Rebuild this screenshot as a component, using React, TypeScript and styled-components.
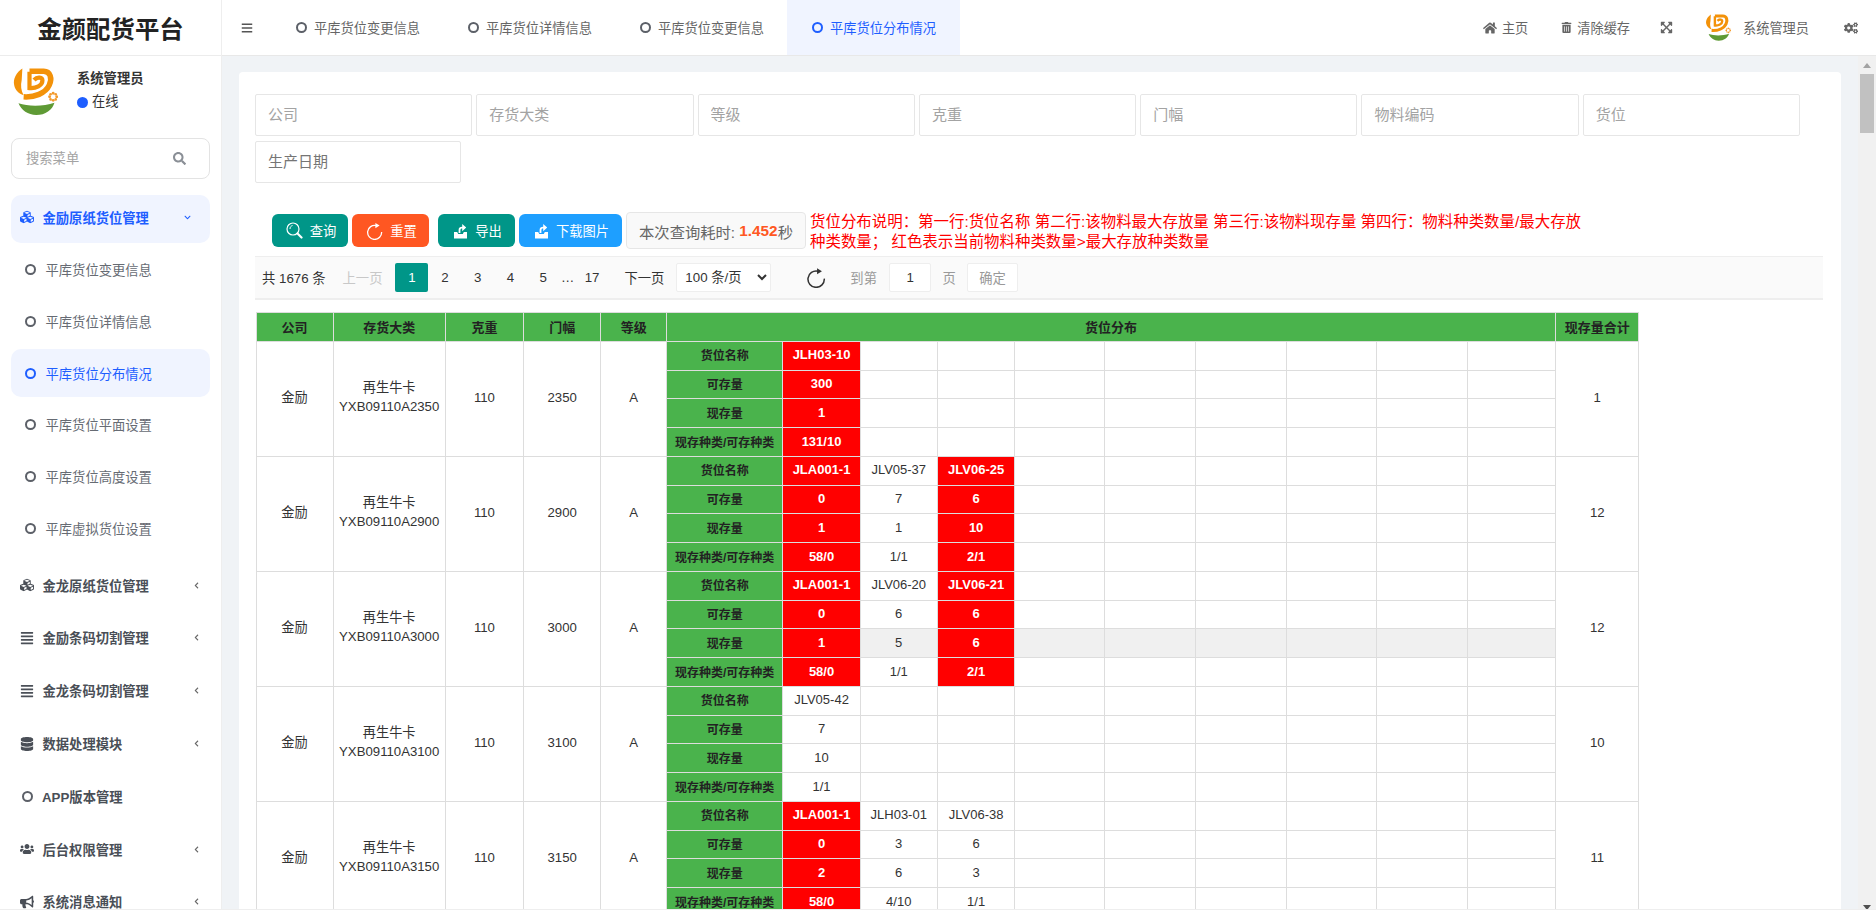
import React from 'react'
import styled, { createGlobalStyle } from 'styled-components'
import {
  FaAlignJustify,
  FaBars,
  FaBullhorn,
  FaCogs,
  FaCubes,
  FaDatabase,
  FaExpandArrowsAlt,
  FaHome,
  FaSearch,
  FaTrashAlt,
  FaUsers,
  FaChevronDown,
  FaChevronLeft,
} from 'react-icons/fa'

const FONT = '"Liberation Sans", "Noto Sans CJK SC", sans-serif'
const BLUE = '#1e5eff'
const TEAL = '#009688'
const GREEN = '#4ab34c'
const LINE = '#dddddd'

const GlobalStyle = createGlobalStyle`
  html, body {
    margin: 0;
    padding: 0;
    background: #eeeeee;
    overflow: hidden;
  }
  * {
    box-sizing: border-box;
  }
  body {
    font-family: ${FONT};
    font-size: 13.3px;
    color: #333;
  }
`

const Shell = styled.div`
  display: grid;
  grid-template-columns: 222px 1fr;
  height: 909px;
  overflow: hidden;
  background: #f0f3f6;
`

const Sidebar = styled.aside`
  display: flex;
  flex-direction: column;
  background: #fff;
  border-right: 1px solid #eeeeee;
  overflow: hidden;
`

const Brand = styled.div`
  flex: none;
  height: 56px;
  display: flex;
  align-items: center;
  justify-content: center;
  font-size: 24.4px;
  font-weight: 700;
  color: #222;
  border-bottom: 1px solid #ececec;
`

const UserPanel = styled.div`
  flex: none;
  height: 82px;
  display: flex;
  padding: 10px 0 0 12px;
`

const UserText = styled.div`
  margin-left: 19px;
  padding-top: 4px;
`

const UserName = styled.div`
  font-size: 13.3px;
  font-weight: 700;
  line-height: 18px;
  color: #333;
`

const OnlineRow = styled.div`
  display: flex;
  align-items: center;
  margin-top: 5px;
  font-size: 13.3px;
  line-height: 18px;
`

const OnlineDot = styled.span`
  width: 11px;
  height: 11px;
  margin-right: 4px;
  border-radius: 50%;
  background: ${BLUE};
`

const SearchBox = styled.div`
  flex: none;
  height: 41px;
  margin: 0 11px;
  padding: 0 23px 0 14px;
  display: flex;
  align-items: center;
  justify-content: space-between;
  border: 1px solid #e3e3e3;
  border-radius: 8px;
  color: #8a8f96;
`

const SearchInput = styled.input`
  width: 120px;
  padding: 0;
  border: 0;
  outline: 0;
  font-family: ${FONT};
  font-size: 13.3px;
  &::placeholder {
    color: #a3a3a3;
  }
`

const Menu = styled.nav`
  flex: none;
  margin: 16px 11px 0;
  display: flex;
  flex-direction: column;
`

const MenuHead = styled.div<{ $open?: boolean }>`
  height: 47.5px;
  margin-bottom: ${({ $open }) => ($open ? 3.5 : 5.3)}px;
  padding: 0 11px ${({ $open }) => ($open ? 3 : 0)}px 8px;
  display: flex;
  align-items: center;
  border-radius: 10px;
  font-size: 13.3px;
  font-weight: 700;
  color: ${({ $open }) => ($open ? BLUE : '#4a4f57')};
  background: ${({ $open }) => ($open ? '#f0f4ff' : 'transparent')};
`

const MenuIcon = styled.span`
  width: 16px;
  margin-right: 7.5px;
  display: flex;
  justify-content: center;
  font-size: 14px;
`

const MenuLabel = styled.span`
  flex: 1;
`

const MenuChevron = styled.span<{ $open?: boolean }>`
  display: flex;
  margin-right: ${({ $open }) => ($open ? 8 : -1)}px;
  font-size: 7px;
  color: ${({ $open }) => ($open ? BLUE : '#666')};
`

const Ring = styled.i<{ $active?: boolean }>`
  flex: none;
  display: block;
  width: 11px;
  height: 11px;
  border: 2px solid ${({ $active }) => ($active ? BLUE : '#5c6068')};
  border-radius: 50%;
`

const AppRing = styled(Ring)`
  margin: 0 9px 0 3px;
`

const SubList = styled.div`
  margin-bottom: 9.5px;
  display: flex;
  flex-direction: column;
  gap: 4.2px;
`

const SubItem = styled.div<{ $active?: boolean }>`
  height: 47.5px;
  padding-left: 14px;
  display: flex;
  align-items: center;
  gap: 9.5px;
  border-radius: 10px;
  font-size: 13.3px;
  color: ${({ $active }) => ($active ? BLUE : '#666b73')};
  background: ${({ $active }) => ($active ? '#f0f4ff' : 'transparent')};
`

const Main = styled.div`
  display: flex;
  flex-direction: column;
  min-width: 0;
`

const TopBar = styled.header`
  flex: none;
  height: 56px;
  display: flex;
  align-items: stretch;
  background: #fff;
  border-bottom: 1px solid #e8e8e8;
  color: #666;
`

const Burger = styled.div`
  width: 49px;
  padding-left: 19px;
  display: flex;
  align-items: center;
  font-size: 12px;
  color: #555;
`

const Tab = styled.div<{ $active?: boolean }>`
  flex: none;
  width: ${({ $active }) => ($active ? 173 : 172)}px;
  padding-left: 25px;
  display: flex;
  align-items: center;
  gap: 7px;
  font-size: 13.25px;
  color: ${({ $active }) => ($active ? BLUE : '#666')};
  background: ${({ $active }) => ($active ? '#f0f4ff' : 'transparent')};
`

const Tools = styled.div`
  margin-left: auto;
  padding-right: 18px;
  display: flex;
  align-items: center;
`

const Tool = styled.div<{ $gap?: number }>`
  margin-left: ${({ $gap }) => $gap ?? 33}px;
  display: flex;
  align-items: center;
  gap: 5px;
  font-size: 13.2px;
  color: #666;
`

const Body = styled.div`
  flex: 1;
  min-height: 0;
  display: flex;
`

const Content = styled.main`
  flex: 1;
  min-width: 0;
  padding: 16px 17px 0 17px;
  overflow: hidden;
`

const Card = styled.section`
  height: 100%;
  padding: 22px 17px 0 16px;
  background: #fff;
  border-radius: 4px 4px 0 0;
  overflow: hidden;
`

const Filters = styled.div`
  display: flex;
  flex-wrap: wrap;
  gap: 5.4px 4px;
`

const FilterInput = styled.input<{ $wide?: boolean; $strong?: boolean }>`
  width: ${({ $wide }) => ($wide ? 205.5 : 217.3)}px;
  height: 42px;
  padding: 0 12px 2px;
  border: 1px solid #e6e6e6;
  border-radius: 2px;
  outline: 0;
  font-family: ${FONT};
  font-size: 15px;
  &::placeholder {
    color: ${({ $strong }) => ($strong ? '#757575' : '#a3a3a3')};
  }
`

const Toolbar = styled.div`
  height: 37px;
  margin-top: 29px;
  padding-left: 17px;
  display: flex;
  align-items: center;
  gap: 4px;
`

const ActionButton = styled.button<{ $color: string; $width: number; $gap?: number }>`
  flex: none;
  width: ${({ $width }) => $width}px;
  height: 33px;
  margin-left: ${({ $gap }) => $gap ?? 0}px;
  padding: 0 0 0 2px;
  display: flex;
  align-items: center;
  justify-content: center;
  gap: 7px;
  border: 0;
  border-radius: 6px;
  font-family: ${FONT};
  font-size: 13.3px;
  color: #fff;
  background: ${({ $color }) => $color};
`

const TimeBox = styled.div`
  flex: none;
  width: 180px;
  height: 37px;
  display: flex;
  align-items: center;
  justify-content: center;
  border: 1px solid #e6e6e6;
  border-radius: 4px;
  background: #f9f9f9;
  font-size: 15.3px;
  white-space: pre;
  color: #666;
  b {
    color: #ff5722;
  }
`

const Note = styled.p`
  width: 778px;
  margin: 0;
  padding-top: 2px;
  font-size: 15.45px;
  line-height: 20px;
  color: #ff0000;
`

const Pager = styled.div`
  width: 1568px;
  height: 43.5px;
  margin-top: 7px;
  padding-left: 7px;
  display: flex;
  align-items: center;
  background: #fafafa;
  border-top: 1px solid #eeeeee;
  border-bottom: 2px solid #eeeeee;
  font-size: 13.3px;
  color: #333;
`

const PagerText = styled.span<{ $muted?: boolean; $gap?: number }>`
  flex: none;
  margin-left: ${({ $gap }) => $gap ?? 0}px;
  color: ${({ $muted }) => ($muted ? '#c8c8c8' : 'inherit')};
`

const PagerHint = styled(PagerText)`
  color: #999;
`

const PageLink = styled.span<{ $current?: boolean; $width?: number }>`
  flex: none;
  width: ${({ $width }) => $width ?? 32.8}px;
  height: 29px;
  display: flex;
  align-items: center;
  justify-content: center;
  border-radius: 2px;
  color: ${({ $current }) => ($current ? '#fff' : 'inherit')};
  background: ${({ $current }) => ($current ? TEAL : 'transparent')};
`

const FirstPage = styled(PageLink)`
  margin-left: 13px;
`

const SizeSelect = styled.select`
  flex: none;
  width: 95px;
  height: 29px;
  margin-left: 12px;
  padding: 0 2px 0 4px;
  border: 1px solid #eeeeee;
  border-radius: 2px;
  outline: 0;
  background: #fff;
  font-family: ${FONT};
  font-size: 13.3px;
  color: #333;
`

const RefreshSlot = styled.span`
  flex: none;
  width: 20px;
  margin-left: 35px;
  display: flex;
  color: #333;
`

const JumpInput = styled.input`
  width: 42.5px;
  height: 29px;
  margin-left: 12px;
  padding: 0;
  border: 1px solid #eeeeee;
  border-radius: 2px;
  outline: 0;
  text-align: center;
  font-family: ${FONT};
  font-size: 13.3px;
  color: #333;
`

const ConfirmButton = styled.button`
  width: 50.5px;
  height: 29px;
  margin-left: 11.5px;
  padding: 0;
  border: 1px solid #eeeeee;
  border-radius: 2px;
  background: #fff;
  font-family: ${FONT};
  font-size: 13.3px;
  color: #999;
`

const Grid = styled.table`
  width: 1383px;
  margin: 12px 0 0 0.5px;
  table-layout: fixed;
  border-collapse: collapse;
  font-size: 13px;
  color: #333;
`

const HeadCell = styled.th`
  height: 29px;
  padding: 0;
  border: 1px solid ${LINE};
  font-size: 13px;
  font-weight: 700;
  text-align: center;
  color: #222;
  background: ${GREEN};
`

const InfoCell = styled.td`
  padding: 0 0 3px;
  border: 1px solid ${LINE};
  font-size: 13.2px;
  line-height: 19px;
  text-align: center;
`

const LabelCell = styled.td`
  height: 28.75px;
  padding: 0 0 2px;
  border: 1px solid ${LINE};
  font-size: 12px;
  font-weight: 700;
  text-align: center;
  color: #222;
  background: ${GREEN};
`

const SlotCell = styled.td<{ $alert?: boolean; $hover?: boolean }>`
  height: 28.75px;
  padding: 0 0 2px;
  border: 1px solid ${LINE};
  text-align: center;
  font-weight: ${({ $alert }) => ($alert ? 700 : 400)};
  color: ${({ $alert }) => ($alert ? '#fff' : '#333')};
  background: ${({ $alert, $hover }) => ($alert ? '#ff0000' : $hover ? '#f0f0f0' : '#fff')};
`

const ScrollRail = styled.div`
  flex: none;
  width: 18.5px;
  padding-top: 7px;
  display: flex;
  flex-direction: column;
  align-items: center;
  background: #f1f1f1;
`

const RailArrow = styled.i<{ $down?: boolean }>`
  display: block;
  border-left: 4px solid transparent;
  border-right: 4px solid transparent;
  border-top: ${({ $down }) => ($down ? '5px solid #505050' : '0')};
  border-bottom: ${({ $down }) => ($down ? '0' : '5px solid #a3a3a3')};
  margin-top: ${({ $down }) => ($down ? 'auto' : '0')};
  margin-bottom: ${({ $down }) => ($down ? '7px' : '0')};
`

const RailThumb = styled.div`
  width: 14.5px;
  height: 59px;
  margin-top: 6px;
  background: #c1c1c1;
`

const Logo: React.FC<{ size: number }> = ({ size }) => (
  <svg width={size} height={size * 1.1} viewBox="30 32 142 156" style={{ flex: 'none' }}>
    <path d="M62 40C44 52 32 72 37 92c3 14 14 25 29 30-8-14-10-30-6-47z" fill="#f39209" />
    <path d="M84 48h44c20 0 27 22 17 43-12 26-46 38-79 36" fill="none" stroke="#f39209" strokeWidth="17" />
    <path d="M84 50v50c20 2 40-8 40-23 0-11-16-13-26-2" fill="none" stroke="#f39209" strokeWidth="13" />
    <path d="M50 147c30 10 78 10 111-2-6 22-28 38-56 38-26 0-46-14-55-36z" fill="#5f9a35" />
    <g fill="#f39a2c">
      <circle cx="157" cy="116" r="4.5" />
      <circle cx="157" cy="138" r="4.5" />
      <circle cx="146" cy="127" r="4.5" />
      <circle cx="168" cy="127" r="4.5" />
      <circle cx="149" cy="119" r="4" />
      <circle cx="165" cy="119" r="4" />
      <circle cx="149" cy="135" r="4" />
      <circle cx="165" cy="135" r="4" />
    </g>
  </svg>
)

const LensIcon = () => (
  <svg width="17" height="17" viewBox="0 0 17 17" fill="none" stroke="#fff">
    <circle cx="7" cy="7" r="6" strokeWidth="1.2" />
    <path d="M4 7c0-2 1-3 2.5-3.5" strokeWidth="1" />
    <path d="M11.5 11.5l4 4" strokeWidth="2.2" strokeLinecap="round" />
  </svg>
)

const RefreshIcon: React.FC<{ size?: number }> = ({ size = 17 }) => (
  <svg width={size} height={size + 1} viewBox="0 0 17 18" fill="none" stroke="currentColor">
    <path d="M10.2 3.6A7 7 0 1 0 15.6 10" strokeWidth="1.3" />
    <path d="M9.4 1l4.2 2.6-4.2 2.6z" fill="currentColor" stroke="none" />
  </svg>
)

const ExportIcon = () => (
  <svg width="15" height="16" viewBox="0 0 15 16" fill="#fff">
    <path d="M1 9h3.2l1 2h4.6l1-2H14v6.5H1z" />
    <path d="M5.6 10V7c0-2 1.4-3.2 3.6-3.2V1l4 3.6-4 3.6V5.6c-1.2 0-1.8.6-1.8 1.6V10z" />
  </svg>
)

const SUB_ITEMS = ['平库货位变更信息', '平库货位详情信息', '平库货位分布情况', '平库货位平面设置', '平库货位高度设置', '平库虚拟货位设置']
const TABS = ['平库货位变更信息', '平库货位详情信息', '平库货位变更信息', '平库货位分布情况']
const FILTERS = ['公司', '存货大类', '等级', '克重', '门幅', '物料编码', '货位']
const ROW_LABELS = ['货位名称', '可存量', '现存量', '现存种类/可存种类']
const COLUMN_WIDTHS = [77, 112.4, 78, 77.5, 65.5, 116.6, 77.1, 77.3, 77.5, 90, 91, 91.1, 89.9, 91.1, 87.7, 83.2]

type Slot = { values: string[]; alert?: boolean }
type Group = { width: string; total: string; slots: Slot[]; hoverRow?: number }

const GROUPS: Group[] = [
  { width: '2350', total: '1', slots: [{ values: ['JLH03-10', '300', '1', '131/10'], alert: true }] },
  {
    width: '2900',
    total: '12',
    slots: [
      { values: ['JLA001-1', '0', '1', '58/0'], alert: true },
      { values: ['JLV05-37', '7', '1', '1/1'] },
      { values: ['JLV06-25', '6', '10', '2/1'], alert: true },
    ],
  },
  {
    width: '3000',
    total: '12',
    hoverRow: 2,
    slots: [
      { values: ['JLA001-1', '0', '1', '58/0'], alert: true },
      { values: ['JLV06-20', '6', '5', '1/1'] },
      { values: ['JLV06-21', '6', '6', '2/1'], alert: true },
    ],
  },
  { width: '3100', total: '10', slots: [{ values: ['JLV05-42', '7', '10', '1/1'] }] },
  {
    width: '3150',
    total: '11',
    slots: [
      { values: ['JLA001-1', '0', '2', '58/0'], alert: true },
      { values: ['JLH03-01', '3', '6', '4/10'] },
      { values: ['JLV06-38', '6', '3', '1/1'] },
    ],
  },
]

const DistributionTable = () => (
  <Grid>
    <colgroup>
      {COLUMN_WIDTHS.map((w, i) => (
        <col key={i} style={{ width: w }} />
      ))}
    </colgroup>
    <thead>
      <tr>
        <HeadCell>公司</HeadCell>
        <HeadCell>存货大类</HeadCell>
        <HeadCell>克重</HeadCell>
        <HeadCell>门幅</HeadCell>
        <HeadCell>等级</HeadCell>
        <HeadCell colSpan={10}>货位分布</HeadCell>
        <HeadCell>现存量合计</HeadCell>
      </tr>
    </thead>
    <tbody>
      {GROUPS.map((group) =>
        ROW_LABELS.map((label, row) => (
          <tr key={group.width + label}>
            {row === 0 && (
              <>
                <InfoCell rowSpan={4}>金励</InfoCell>
                <InfoCell rowSpan={4}>
                  再生牛卡
                  <br />
                  {'YXB09110A' + group.width}
                </InfoCell>
                <InfoCell rowSpan={4}>110</InfoCell>
                <InfoCell rowSpan={4}>{group.width}</InfoCell>
                <InfoCell rowSpan={4}>A</InfoCell>
              </>
            )}
            <LabelCell>{label}</LabelCell>
            {Array.from({ length: 9 }, (_, col) => {
              const slot = group.slots[col]
              return (
                <SlotCell key={col} $alert={slot?.alert} $hover={group.hoverRow === row}>
                  {slot?.values[row]}
                </SlotCell>
              )
            })}
            {row === 0 && <InfoCell rowSpan={4}>{group.total}</InfoCell>}
          </tr>
        ))
      )}
    </tbody>
  </Grid>
)

const App: React.FC = () => {
  return (
    <>
      <GlobalStyle />
      <Shell>
        <Sidebar>
          <Brand>金颜配货平台</Brand>
          <UserPanel>
            <Logo size={46} />
            <UserText>
              <UserName>系统管理员</UserName>
              <OnlineRow>
                <OnlineDot />
                在线
              </OnlineRow>
            </UserText>
          </UserPanel>
          <SearchBox>
            <SearchInput placeholder="搜索菜单" />
            <FaSearch size={13} />
          </SearchBox>
          <Menu>
            <MenuHead $open>
              <MenuIcon>
                <FaCubes />
              </MenuIcon>
              <MenuLabel>金励原纸货位管理</MenuLabel>
              <MenuChevron $open>
                <FaChevronDown />
              </MenuChevron>
            </MenuHead>
            <SubList>
              {SUB_ITEMS.map((item, i) => (
                <SubItem key={item} $active={i === 2}>
                  <Ring $active={i === 2} />
                  {item}
                </SubItem>
              ))}
            </SubList>
            {[
              { label: '金龙原纸货位管理', icon: <FaCubes /> },
              { label: '金励条码切割管理', icon: <FaAlignJustify /> },
              { label: '金龙条码切割管理', icon: <FaAlignJustify /> },
              { label: '数据处理模块', icon: <FaDatabase /> },
            ].map(({ label, icon }) => (
              <MenuHead key={label}>
                <MenuIcon>{icon}</MenuIcon>
                <MenuLabel>{label}</MenuLabel>
                <MenuChevron>
                  <FaChevronLeft />
                </MenuChevron>
              </MenuHead>
            ))}
            <MenuHead>
              <AppRing />
              <MenuLabel>APP版本管理</MenuLabel>
            </MenuHead>
            {[
              { label: '后台权限管理', icon: <FaUsers /> },
              { label: '系统消息通知', icon: <FaBullhorn /> },
            ].map(({ label, icon }) => (
              <MenuHead key={label}>
                <MenuIcon>{icon}</MenuIcon>
                <MenuLabel>{label}</MenuLabel>
                <MenuChevron>
                  <FaChevronLeft />
                </MenuChevron>
              </MenuHead>
            ))}
          </Menu>
        </Sidebar>
        <Main>
          <TopBar>
            <Burger>
              <FaBars />
            </Burger>
            {TABS.map((tab, i) => (
              <Tab key={i} $active={i === 3}>
                <Ring $active={i === 3} />
                {tab}
              </Tab>
            ))}
            <Tools>
              <Tool>
                <FaHome size={14} />
                主页
              </Tool>
              <Tool>
                <FaTrashAlt size={11} />
                清除缓存
              </Tool>
              <Tool $gap={30}>
                <FaExpandArrowsAlt size={13} />
              </Tool>
              <Tool $gap={32}>
                <Logo size={26} />
              </Tool>
              <Tool $gap={12}>系统管理员</Tool>
              <Tool $gap={35}>
                <FaCogs size={14} />
              </Tool>
            </Tools>
          </TopBar>
          <Body>
            <Content>
              <Card>
                <Filters>
                  {FILTERS.map((name) => (
                    <FilterInput key={name} placeholder={name} />
                  ))}
                  <FilterInput $wide $strong placeholder="生产日期" />
                </Filters>
                <Toolbar>
                  <ActionButton $color={TEAL} $width={76}>
                    <LensIcon />
                    查询
                  </ActionButton>
                  <ActionButton $color="#ff5722" $width={77}>
                    <RefreshIcon />
                    重置
                  </ActionButton>
                  <ActionButton $color={TEAL} $width={77} $gap={5}>
                    <ExportIcon />
                    导出
                  </ActionButton>
                  <ActionButton $color="#1e9fff" $width={103}>
                    <ExportIcon />
                    下载图片
                  </ActionButton>
                  <TimeBox>
                    本次查询耗时: <b>1.452</b>秒
                  </TimeBox>
                  <Note>
                    货位分布说明：第一行:货位名称 第二行:该物料最大存放量 第三行:该物料现存量 第四行：物料种类数量/最大存放种类数量； 红色表示当前物料种类数量&gt;最大存放种类数量
                  </Note>
                </Toolbar>
                <Pager>
                  <PagerText>共 1676 条</PagerText>
                  <PagerText $muted $gap={17}>
                    上一页
                  </PagerText>
                  <FirstPage $current $width={33}>
                    1
                  </FirstPage>
                  <PageLink>2</PageLink>
                  <PageLink>3</PageLink>
                  <PageLink>4</PageLink>
                  <PageLink>5</PageLink>
                  <PageLink $width={16}>…</PageLink>
                  <PageLink>17</PageLink>
                  <PagerText $gap={16}>下一页</PagerText>
                  <SizeSelect defaultValue="100">
                    <option value="100">100 条/页</option>
                  </SizeSelect>
                  <RefreshSlot>
                    <RefreshIcon size={20} />
                  </RefreshSlot>
                  <PagerHint $gap={24}>到第</PagerHint>
                  <JumpInput defaultValue="1" />
                  <PagerHint $gap={11}>页</PagerHint>
                  <ConfirmButton>确定</ConfirmButton>
                </Pager>
                <DistributionTable />
              </Card>
            </Content>
            <ScrollRail>
              <RailArrow />
              <RailThumb />
              <RailArrow $down />
            </ScrollRail>
          </Body>
        </Main>
      </Shell>
    </>
  )
}

export default App
